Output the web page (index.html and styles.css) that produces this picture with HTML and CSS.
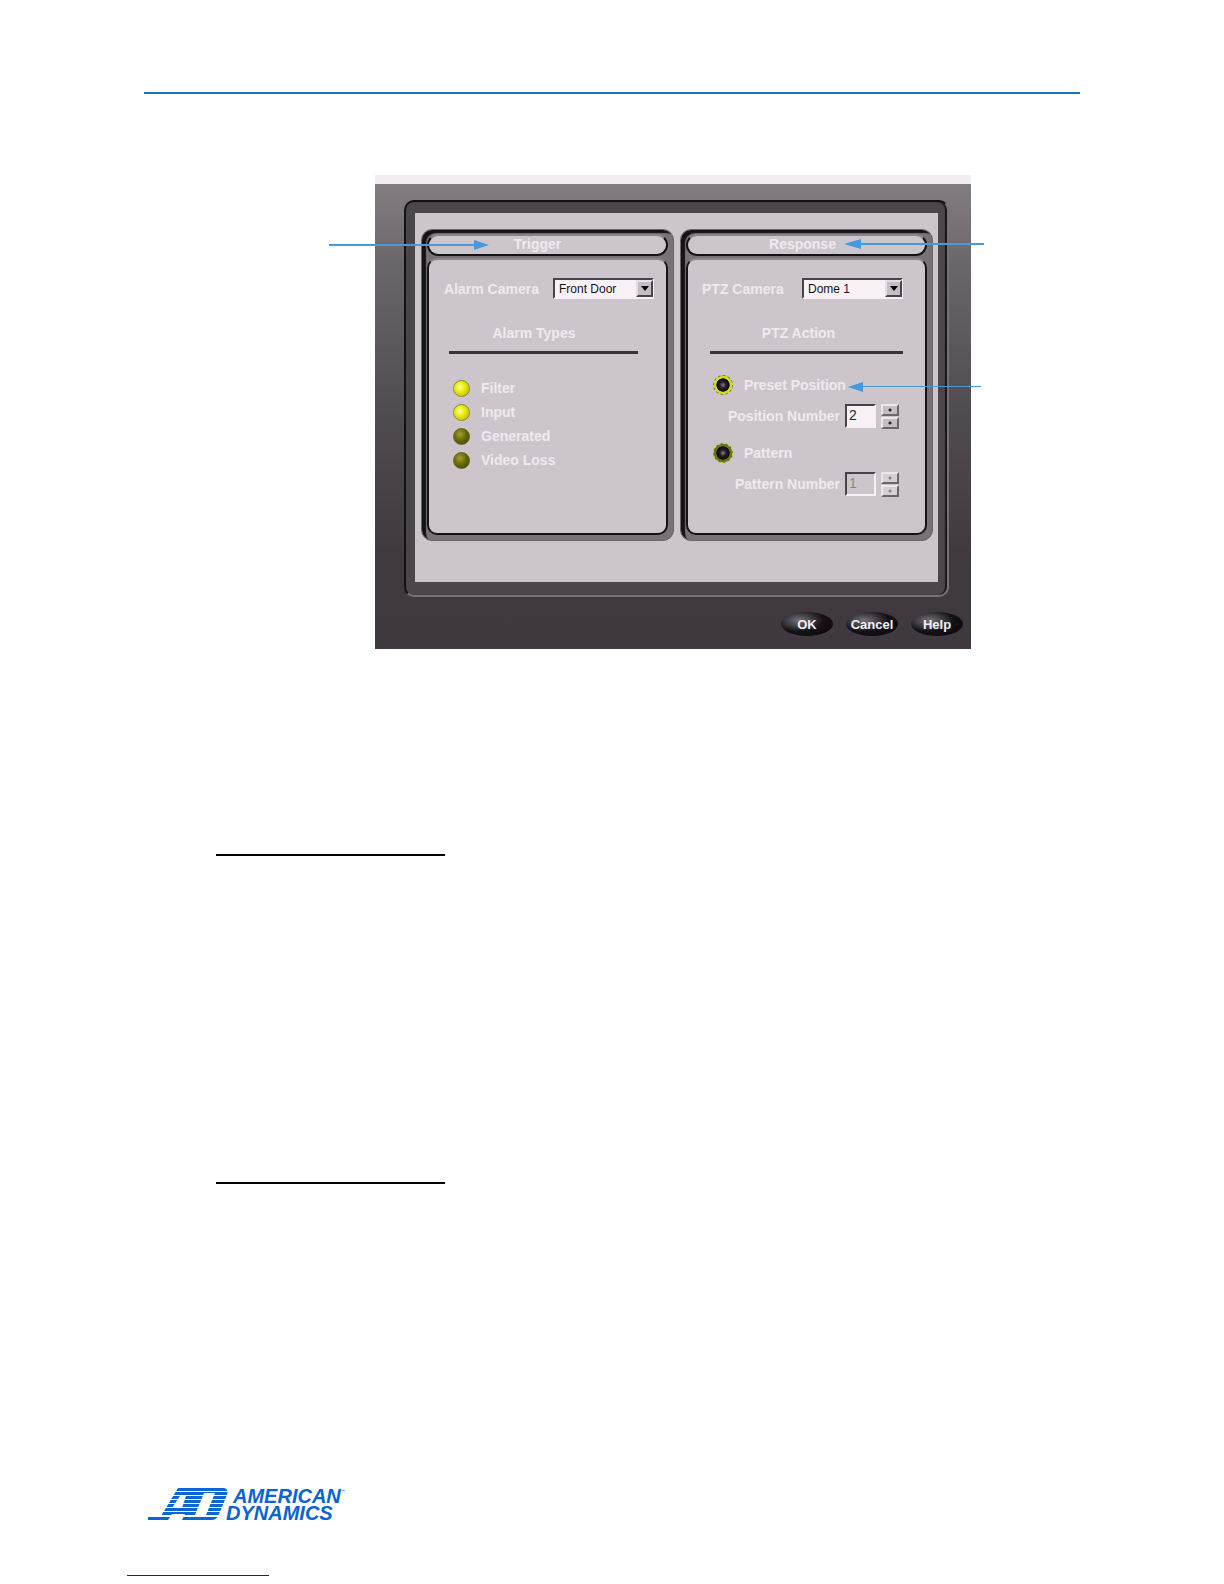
FILE: index.html
```html
<!DOCTYPE html>
<html lang="en">
<head>
    <meta charset="UTF-8">
    <meta name="viewport" content="width=device-width, initial-scale=1.0">
    <title>Alarm Trigger and Response</title>
    <link rel="stylesheet" href="styles.css">
</head>
<body>
    <header class="page-header"></header>

    <main>
        <div class="figure">
            <form class="dialog">
                <div class="bezel">
                    <div class="screen">

                        <!-- Trigger -->
                        <section class="panel trigger">
                            <h2 class="panel-title">Trigger</h2>
                            <div class="panel-body">
                                <div class="camera-row">
                                    <label for="alarmCamera">Alarm Camera</label>
                                    <span class="select">
                                        <select id="alarmCamera" name="alarmCamera">
                                            <option>Front Door</option>
                                        </select>
                                        <span class="select-arrow"><svg width="8" height="5" viewBox="0 0 8 5"><path d="M0 0h8L4 5z"/></svg></span>
                                    </span>
                                </div>
                                <h3>Alarm Types</h3>
                                <hr class="divider">
                                <div class="types">
                                    <label><input type="checkbox" class="led" checked> Filter</label>
                                    <label><input type="checkbox" class="led" checked> Input</label>
                                    <label><input type="checkbox" class="led"> Generated</label>
                                    <label><input type="checkbox" class="led"> Video Loss</label>
                                </div>
                            </div>
                        </section>

                        <!-- Response -->
                        <section class="panel response">
                            <h2 class="panel-title">Response</h2>
                            <div class="panel-body">
                                <div class="camera-row">
                                    <label for="ptzCamera">PTZ Camera</label>
                                    <span class="select">
                                        <select id="ptzCamera" name="ptzCamera">
                                            <option>Dome 1</option>
                                        </select>
                                        <span class="select-arrow"><svg width="8" height="5" viewBox="0 0 8 5"><path d="M0 0h8L4 5z"/></svg></span>
                                    </span>
                                </div>
                                <h3>PTZ Action</h3>
                                <hr class="divider">
                                <div class="actions">
                                    <label class="action"><input type="radio" name="action" checked> Preset Position</label>
                                    <div class="number-row">
                                        <label for="position">Position Number</label>
                                        <input type="text" id="position" value="2">
                                        <span class="spinner">
                                            <button type="button" aria-label="Increase position"></button>
                                            <button type="button" aria-label="Decrease position"></button>
                                        </span>
                                    </div>
                                    <label class="action"><input type="radio" name="action"> Pattern</label>
                                    <div class="number-row">
                                        <label for="pattern">Pattern Number</label>
                                        <input type="text" id="pattern" value="1" disabled>
                                        <span class="spinner">
                                            <button type="button" aria-label="Increase pattern" disabled></button>
                                            <button type="button" aria-label="Decrease pattern" disabled></button>
                                        </span>
                                    </div>
                                </div>
                            </div>
                        </section>
                    </div>
                </div>
                <div class="buttons">
                    <button type="button" class="btn">OK</button>
                    <button type="button" class="btn">Cancel</button>
                    <button type="button" class="btn">Help</button>
                </div>
            </form>

            <!-- Callout arrows -->
            <svg class="callout callout-trigger" width="160" height="10" viewBox="0 0 160 10"><path d="M0 4h146v2H0z"/><path d="M145 0l15 5-15 5z"/></svg>
            <svg class="callout callout-response" width="140" height="10" viewBox="0 0 140 10"><path d="M14 4h126v2H14z"/><path d="M17 0L0 5l17 5z"/></svg>
            <svg class="callout callout-preset" width="133" height="10" viewBox="0 0 133 10"><path d="M14 4h119v1H14z"/><path d="M15 0L0 5l15 5z"/></svg>
        </div>

        <hr class="section-rule">
        <hr class="section-rule">
    </main>

    <footer class="page-footer">
        <div class="logo">
            <svg width="80" height="32" viewBox="0 0 80 32">
                <defs>
                    <clipPath id="mark">
                        <path clip-rule="evenodd" d="M0 28H13L30 0H75Q81 0 79 7L71 26Q69 32 63 32H34L37 26H24L20 32H0ZM32 8L24 20H34L38 8ZM56 5L47 27H58L67 5Z"/>
                    </clipPath>
                </defs>
                <path class="stripes" clip-path="url(#mark)" d="M0 1.5h80M0 5.5h80M0 9.5h80M0 13.5h80M0 17.5h80M0 21.5h80M0 25.5h80M0 30.5h80"/>
            </svg>
            <div class="logo-name">
                <span>AMERICAN<sup>™</sup></span>
                <span class="logo-line">DYNAMICS</span>
            </div>
        </div>
        <hr class="footer-rule">
    </footer>
</body>
</html>
```

FILE: styles.css
```css
* {
    box-sizing: border-box;
}
body {
    margin: 0;
    background-color: #fff;
    font-family: "Liberation Sans", Arial, sans-serif;
    font-size: 14px;
    line-height: 16px;
}
h2,
h3,
hr {
    margin: 0;
    border: none;
}
.page-header {
    margin: 92px 144px 0;
    border-top: 2px solid #1877c5;
}
.figure {
    position: relative;
    min-width: 640px;
    margin: 81px 240px 0 329px;
    padding: 0 13px 0 46px;
}

/* Dialog frame */
.dialog {
    border-top: 9px solid #f3eef3;
    background: linear-gradient(#837d82, #6a656a 18%, #504b51 50%, #403a40 80%, #3f383e);
    padding: 16px 22px 13px 29px;
    font-weight: bold;
    color: #eeeaee;
}
.bezel {
    padding: 11px 9px 13px;
    border: 2px solid;
    border-color: #121014 #777177 #777177 #121014;
    border-radius: 10px;
    background-color: #4b464b;
    box-shadow: inset -2px 0 1px #19161a;
}
.screen {
    display: grid;
    grid-template-columns: 1fr 1fr;
    gap: 6px;
    padding: 16px 5px 41px 6px;
    background-color: #ccc5cc;
}

/* Panels */
.panel {
    padding: 4px 5px 5px;
    border: 1px solid #69646a;
    border-radius: 11px;
    background-color: #777277;
    box-shadow: inset 4px 3px 1px #151217;
}
.panel-title {
    height: 22px;
    border: 2px solid #151217;
    border-top-color: #8a858b;
    border-radius: 11px;
    background-color: #ccc5cc;
    font-size: 14px;
    line-height: 16px;
    text-align: center;
}
.panel-body {
    min-height: 277px;
    margin-top: 2px;
    padding-top: 18px;
    border: 2px solid #151217;
    border-top-color: #8a858b;
    border-radius: 10px;
    background-color: #ccc5cc;
}
.trigger .panel-title {
    padding-right: 20px;
}
.trigger .panel-body {
    padding-left: 15px;
    padding-right: 12px;
}
.response .panel-title {
    padding-right: 8px;
}
.response .panel-body {
    padding-left: 14px;
    padding-right: 22px;
}
.camera-row {
    display: flex;
    align-items: center;
    justify-content: space-between;
    height: 21px;
}
.panel h3 {
    margin-top: 26px;
    padding-right: 8px;
    font-size: 14px;
    line-height: 16px;
    text-align: center;
}
.trigger h3 {
    padding-right: 30px;
}
.divider {
    height: 3px;
    margin: 10px 0 0 8px;
    background-color: #39343a;
}
.trigger .divider {
    margin-left: 5px;
    margin-right: 16px;
}

/* Drop-downs */
.select {
    position: relative;
    width: 101px;
    height: 21px;
}
.select select {
    appearance: none;
    width: 100%;
    height: 100%;
    padding: 0 18px 0 4px;
    border: 2px solid;
    border-color: #48434a #f4f0f4 #f4f0f4 #48434a;
    border-radius: 0;
    background-color: #f6f2f6;
    color: #151217;
    font: 12px "Liberation Sans", Arial, sans-serif;
}
.select-arrow {
    position: absolute;
    top: 2px;
    right: 1px;
    display: flex;
    align-items: center;
    justify-content: center;
    width: 17px;
    height: 17px;
    border: 2px solid;
    border-color: #e4dfe4 #48434a #48434a #e4dfe4;
    background-color: #c4bec4;
    pointer-events: none;
}

/* Alarm types */
.types {
    margin-top: 22px;
    padding-left: 9px;
}
.types label {
    display: flex;
    align-items: center;
    gap: 11px;
    height: 24px;
}
.led {
    appearance: none;
    width: 17px;
    height: 17px;
    margin: 0;
    border: 1px solid #66661d;
    border-radius: 50%;
    background: radial-gradient(circle at 40% 35%, #a0a03a, #6f7208 40%, #484a05 80%);
}
.led:checked {
    border-color: #8f8d2a;
    background: radial-gradient(circle at 40% 40%, #ffff8a, #e9ea12 40%, #b5b500 90%);
}

/* PTZ actions */
.actions {
    display: flex;
    flex-direction: column;
    gap: 9px;
    margin-top: 21px;
}
.action {
    display: flex;
    align-items: center;
    gap: 11px;
    height: 20px;
    padding-left: 11px;
}
.action input {
    appearance: none;
    width: 20px;
    height: 20px;
    margin: 0;
    border: 1px dashed #c3c94a;
    border-radius: 50%;
    background: radial-gradient(circle 7px, #8a878b, #29252b 40%, #0b090c 90%, #6d7212) border-box;
}
.action input:checked {
    border-color: #77751d;
    background: radial-gradient(circle 7px, #8a878b, #29252b 40%, #0b090c 90%, #d3dc2a) border-box;
}
.number-row {
    display: flex;
    align-items: center;
    justify-content: flex-end;
    gap: 5px;
    height: 24px;
    margin-bottom: 6px;
    padding-right: 4px;
}
.number-row input {
    width: 31px;
    height: 24px;
    padding: 0 0 2px 2px;
    border: 2px solid;
    border-color: #48434a #f4f0f4 #f4f0f4 #48434a;
    background-color: #f6f2f6;
    color: #29252b;
    font: 14px "Liberation Sans", Arial, sans-serif;
}
.number-row input:disabled {
    background-color: #ccc5cc;
    color: #8a858b;
}
.spinner {
    display: grid;
    gap: 1px;
}
.spinner button {
    width: 18px;
    height: 12px;
    padding: 0;
    border: 2px solid;
    border-color: #ece7ec #6a656b #6a656b #ece7ec;
    background: radial-gradient(circle, #29252b 1px, #c4bec4 2px);
}
.spinner button:disabled {
    background: radial-gradient(circle, #8a858b 1px, #d6d0d6 2px);
}

/* Dialog buttons */
.buttons {
    display: flex;
    justify-content: flex-end;
    gap: 13px;
    margin: 15px -14px 0 0;
}
.btn {
    width: 52px;
    height: 24px;
    padding: 0;
    border: none;
    border-radius: 50%;
    background: radial-gradient(ellipse at 35% 35%, #77727a, #151217 50%, #050406);
    color: #f4f0f4;
    font: bold 13px "Liberation Sans", Arial, sans-serif;
    white-space: nowrap;
    cursor: pointer;
}

/* Callouts lie over the dialog */
.callout {
    position: absolute;
    fill: #4599dc;
}
.callout-trigger {
    top: 65px;
    left: 0;
}
.callout-response {
    top: 64px;
    right: 0;
}
.callout-preset {
    top: 207px;
    right: 3px;
}

.section-rule {
    width: 229px;
    height: 2px;
    margin: 205px 0 0 216px;
    background-color: #000;
}
.section-rule + .section-rule {
    margin-top: 326px;
}

/* Footer */
.page-footer {
    padding: 304px 127px 8px;
}
.logo {
    display: flex;
    margin-left: 21px;
    color: #0a63cf;
}
.stripes {
    stroke: #0a66d0;
    stroke-width: 3;
}
.logo-name {
    display: flex;
    flex-direction: column;
    padding-left: 5px;
    font-size: 20px;
    font-style: italic;
    font-weight: bold;
    line-height: 17px;
}
.logo-name sup {
    font-size: 4px;
    line-height: 0;
    vertical-align: 10px;
}
.logo-line {
    margin-left: -7px;
}
.footer-rule {
    width: 142px;
    height: 1px;
    margin-top: 53px;
    background-color: #1b1b9c;
}
```
